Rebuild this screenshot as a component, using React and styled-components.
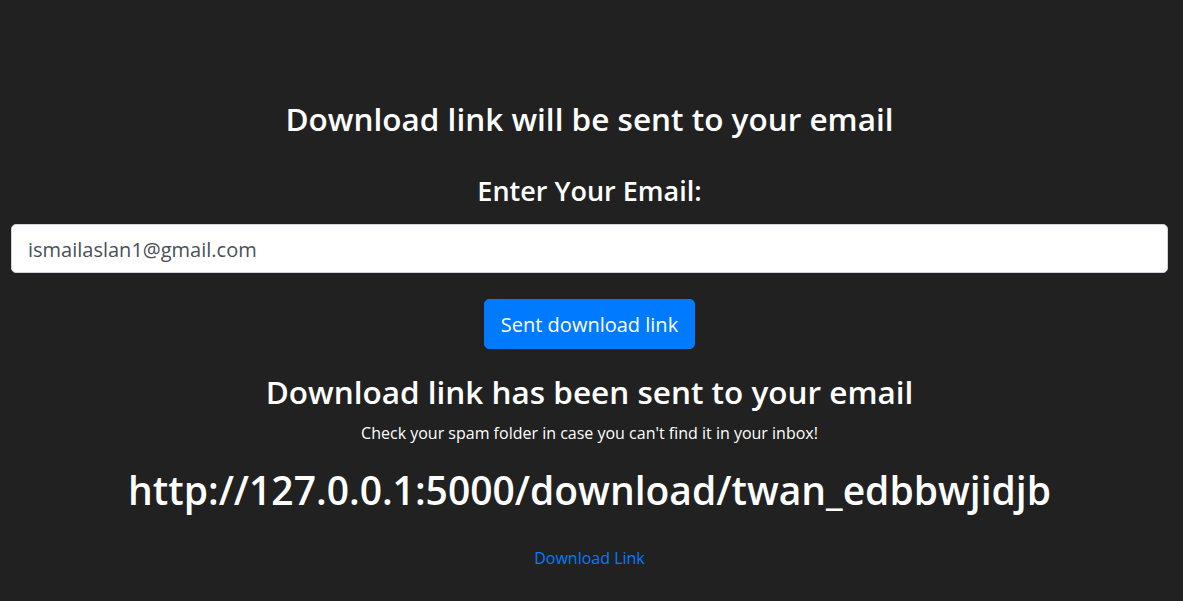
import React from "react";
import styled, { createGlobalStyle } from "styled-components";

const GlobalStyle = createGlobalStyle`
  html, body {
    margin: 0;
    padding: 0;
    background: #212121;
  }
  body {
    font-family: "Open Sans", "Noto Sans", sans-serif;
    color: #fff;
  }
`;

const Page = styled.main`
  min-height: 601px;
  box-sizing: border-box;
  padding: 100px 15px 0 11px;
  display: flex;
  flex-direction: column;
  align-items: center;
  text-align: center;
`;

const Title = styled.h2`
  margin: ${(p) => p.top || 0}px 0 ${(p) => p.gap || 0}px;
  font-size: 31.5px;
  font-weight: 600;
  line-height: 1.2;
`;

const Label = styled.h3`
  margin: 0 0 17px;
  font-size: 27px;
  font-weight: 600;
  line-height: 1.2;
`;

const EmailInput = styled.input`
  box-sizing: border-box;
  width: 100%;
  height: 49px;
  padding: 2px 16px 0;
  font-family: inherit;
  font-size: 20px;
  color: #495057;
  background: #fff;
  border: 1px solid #ced4da;
  border-radius: 5px;
  outline: none;
`;

const SendButton = styled.button`
  margin-top: 26px;
  height: 50px;
  width: 211px;
  padding: 0;
  font-family: inherit;
  font-size: 20px;
  color: #fff;
  background: #007bff;
  border: 1px solid #007bff;
  border-radius: 5px;
  cursor: pointer;
`;

const Note = styled.p`
  margin: 11px 0 0;
  font-size: 16px;
  line-height: 1.4;
`;

const Url = styled.h1`
  margin: 23px 0 0;
  font-size: 39px;
  font-weight: 600;
  line-height: 1.2;
`;

const DownloadAnchor = styled.a`
  margin-top: 33px;
  font-size: 16px;
  color: #007bff;
  text-decoration: none;
`;

export default function App() {
  const link = "http://127.0.0.1:5000/download/twan_edbbwjidjb";
  return (
    <>
      <GlobalStyle />
      <Page>
        <Title gap={37}>Download link will be sent to your email</Title>
        <Label>Enter Your Email:</Label>
        <EmailInput type="email" defaultValue="ismailaslan1@gmail.com" />
        <SendButton type="button">Sent download link</SendButton>
        <Title top={24}>Download link has been sent to your email</Title>
        <Note>Check your spam folder in case you can't find it in your inbox!</Note>
        <Url>{link}</Url>
        <DownloadAnchor href="#">Download Link</DownloadAnchor>
      </Page>
    </>
  );
}
